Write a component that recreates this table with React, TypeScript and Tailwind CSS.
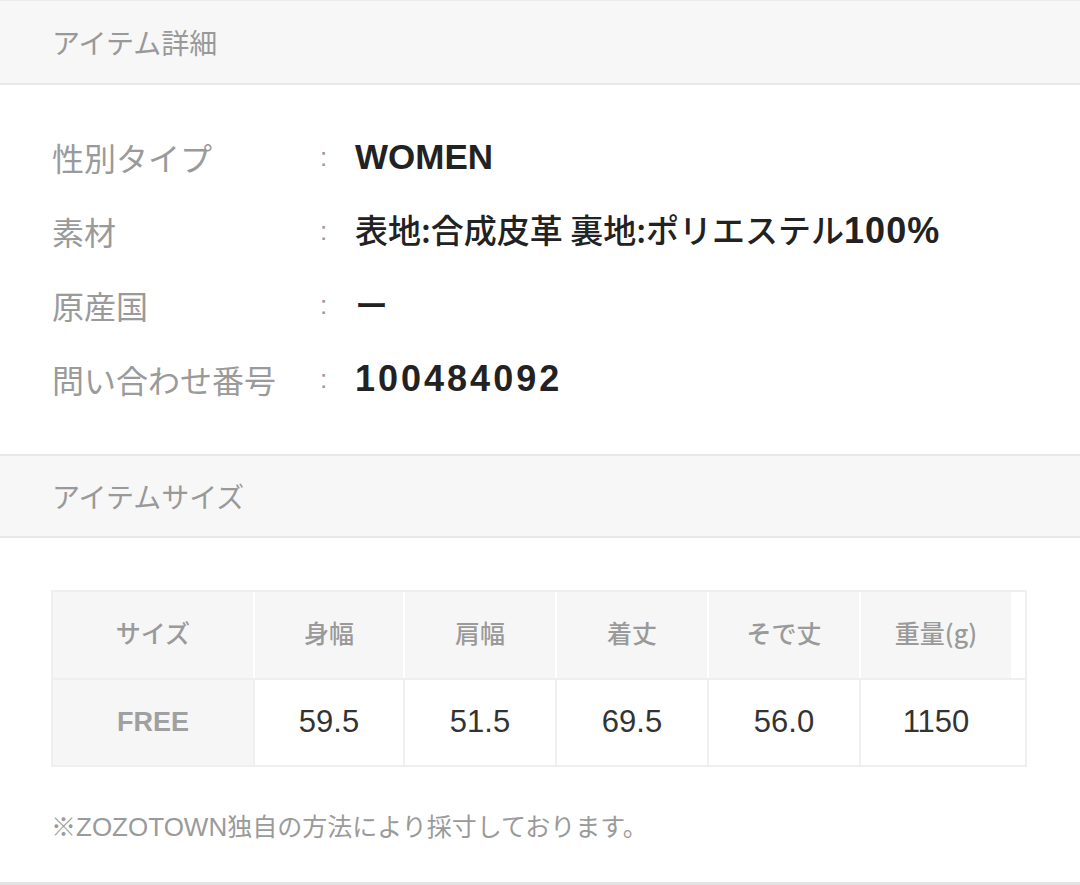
import React from "react";

const rows: { label: string; value: React.ReactNode }[] = [
  { label: "性別タイプ", value: <span className="font-['Liberation_Sans'] font-bold text-[35px]">WOMEN</span> },
  {
    label: "素材",
    value: (
      <>
        表地:合成皮革 裏地:ポリエステル<span className="font-['Liberation_Sans'] font-bold text-[36px] tracking-[1px]">100%</span>
      </>
    ),
  },
  { label: "原産国", value: "ー" },
  { label: "問い合わせ番号", value: <span className="font-['Liberation_Sans'] font-bold text-[36px] tracking-[3px]">100484092</span> },
];

const heads = ["身幅", "肩幅", "着丈", "そで丈", "重量(g)"];
const vals = ["59.5", "51.5", "69.5", "56.0", "1150"];

export default function App() {
  return (
    <div className="w-[1080px] h-[885px] bg-white overflow-hidden font-['Liberation_Sans','Noto_Sans_CJK_JP',sans-serif]">
      {/* header 1 */}
      <div className="h-[85px] border-t border-t-[#ececec] border-b-2 border-b-[#e8e8e8] bg-[#f7f7f7] px-[52px] flex items-center">
        <span className="text-[28px] text-[#999] font-['Noto_Sans_CJK_JP',sans-serif] font-normal">アイテム詳細</span>
      </div>

      {/* details */}
      <div className="pt-[35px] pb-[38px] px-[52px]">
        {rows.map((r) => (
          <div key={r.label} className="h-[74px] flex items-center">
            <div className="w-[268px] text-[32px] text-[#9a9a9a] font-['Noto_Sans_CJK_JP',sans-serif] font-normal">{r.label}</div>
            <div className="w-[35px] text-[26px] text-[#999] font-['Liberation_Sans',sans-serif]">:</div>
            <div className="text-[33px] text-[#222] font-medium font-['Noto_Sans_CJK_JP',sans-serif]">{r.value}</div>
          </div>
        ))}
      </div>

      {/* header 2 */}
      <div className="h-[84px] border-t-2 border-t-[#e8e8e8] border-b-2 border-b-[#e8e8e8] bg-[#f7f7f7] px-[52px] flex items-center">
        <span className="text-[28px] text-[#999] font-['Noto_Sans_CJK_JP',sans-serif] font-normal">アイテムサイズ</span>
      </div>

      {/* size table */}
      <div className="h-[347px] border-b-[3px] border-b-[#e4e4e4] pt-[52px] px-[51px]">
        <div className="w-[976px] border-2 border-[#efefef] bg-[#efefef] flex flex-col gap-[2px]">
          <div className="h-[86px] flex gap-[2px] bg-white">
            <div className="w-[200px] bg-[#f6f6f6] flex items-center justify-center pb-[4px] text-[25px] font-medium text-[#9a9a9a] font-['Noto_Sans_CJK_JP',sans-serif]">
              サイズ
            </div>
            {heads.map((h, i) => (
              <div
                key={h}
                className={`${i === 0 ? "w-[148px]" : "w-[150px]"} bg-[#f6f6f6] flex items-center justify-center pb-[4px] text-[25px] font-medium text-[#9a9a9a] font-['Noto_Sans_CJK_JP',sans-serif]`}
              >
                {h}
              </div>
            ))}
            <div className="flex-1 bg-white" />
          </div>
          <div className="h-[85px] flex gap-[2px]">
            <div className="w-[200px] bg-[#f6f6f6] flex items-center justify-center text-[27px] font-bold text-[#a0a0a0] font-['Liberation_Sans',sans-serif]">
              FREE
            </div>
            {vals.map((v, i) => (
              <div
                key={v + i}
                className={`${i === 0 ? "w-[148px]" : i === 4 ? "flex-1" : "w-[150px]"} bg-white flex items-center justify-center text-[31px] text-[#333] font-['Liberation_Sans',sans-serif]`}
              >
                <span className={i === 4 ? "pr-[14px]" : ""}>{v}</span>
              </div>
            ))}
          </div>
        </div>
        <div className="mt-[40px] text-[25px] leading-[36px] text-[#9a9a9a] font-['Noto_Sans_CJK_JP',sans-serif] font-normal">
          ※<span className="font-['Liberation_Sans'] text-[26px]">ZOZOTOWN</span>独自の方法により採寸しております。
        </div>
      </div>
    </div>
  );
}
